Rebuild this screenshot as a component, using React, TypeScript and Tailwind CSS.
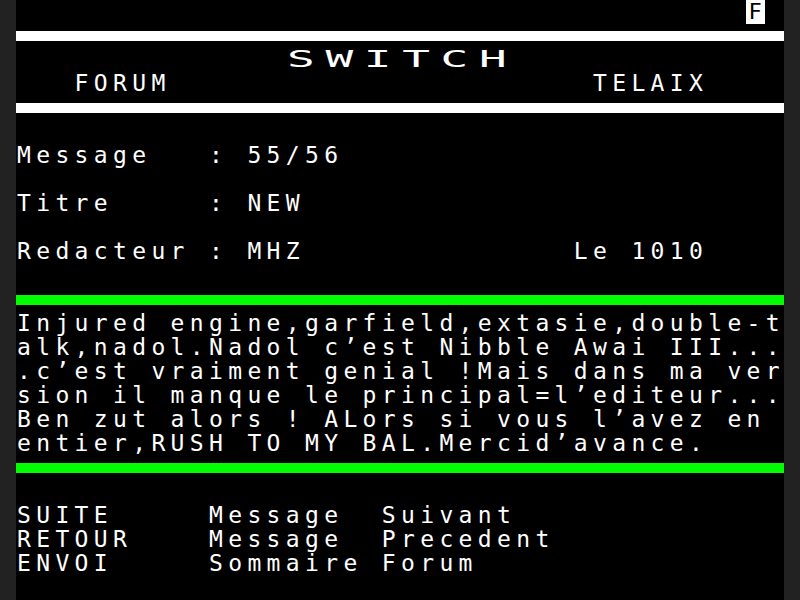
import React from "react";

function line(parts: [number, string][]): string {
  let s = "";
  for (const [col, text] of parts) {
    while (s.length < col) s += " ";
    s += text;
  }
  return s;
}

function TextRow({ text }: { text: string }) {
  return (
    <div className="h-[24px] whitespace-pre text-[23px] leading-[23px] tracking-[5.353px] pl-[1px]">
      {text}
    </div>
  );
}

function Empty() {
  return <div className="h-[24px]" />;
}

function Bar({ color }: { color: "white" | "green" }) {
  return (
    <div className="h-[24px] pt-[7.2px]">
      <div
        className={
          color === "white" ? "h-[9.6px] bg-white" : "h-[9.6px] bg-[#00ff00]"
        }
      />
    </div>
  );
}

const message = [
  "Injured engine,garfield,extasie,double-t",
  "alk,nadol.Nadol c’est Nibble Awai III...",
  ".c’est vraiment genial !Mais dans ma ver",
  "sion il manque le principal=l’editeur...",
  "Ben zut alors ! ALors si vous l’avez en ",
  "entier,RUSH TO MY BAL.Mercid’avance.",
];

export default function App() {
  return (
    <div className="w-[800px] h-[600px] bg-[#222222] flex justify-center overflow-hidden">
      <div className="w-[768px] h-[600px] bg-black text-white font-['DejaVu_Sans_Mono',monospace] flex flex-col">
        {/* row 0 */}
        <div className="h-[24px] flex">
          <div className="w-[729.6px] shrink-0" />
          <div className="w-[19.2px] h-[24px] bg-white text-black text-[22px] leading-[23px] flex justify-center">
            F
          </div>
        </div>
        {/* row 1 */}
        <Bar color="white" />
        {/* row 2 */}
        <div className="h-[24px] pl-[268.8px] text-[23px] leading-[23px] whitespace-pre">
          <span className="inline-block origin-left scale-x-200 tracking-[5.353px] pl-[1px]">
            SWITCH
          </span>
        </div>
        {/* row 3 */}
        <TextRow text={line([[3, "FORUM"], [30, "TELAIX"]])} />
        {/* row 4 */}
        <Bar color="white" />
        <Empty />
        <TextRow text={line([[0, "Message"], [10, ":"], [12, "55/56"]])} />
        <Empty />
        <TextRow text={line([[0, "Titre"], [10, ":"], [12, "NEW"]])} />
        <Empty />
        <TextRow
          text={line([[0, "Redacteur"], [10, ":"], [12, "MHZ"], [29, "Le 1010"]])}
        />
        <Empty />
        <Bar color="green" />
        {message.map((m, i) => (
          <TextRow key={i} text={m} />
        ))}
        <Bar color="green" />
        <Empty />
        <TextRow text={line([[0, "SUITE"], [10, "Message"], [19, "Suivant"]])} />
        <TextRow text={line([[0, "RETOUR"], [10, "Message"], [19, "Precedent"]])} />
        <TextRow text={line([[0, "ENVOI"], [10, "Sommaire"], [19, "Forum"]])} />
        <Empty />
      </div>
    </div>
  );
}
